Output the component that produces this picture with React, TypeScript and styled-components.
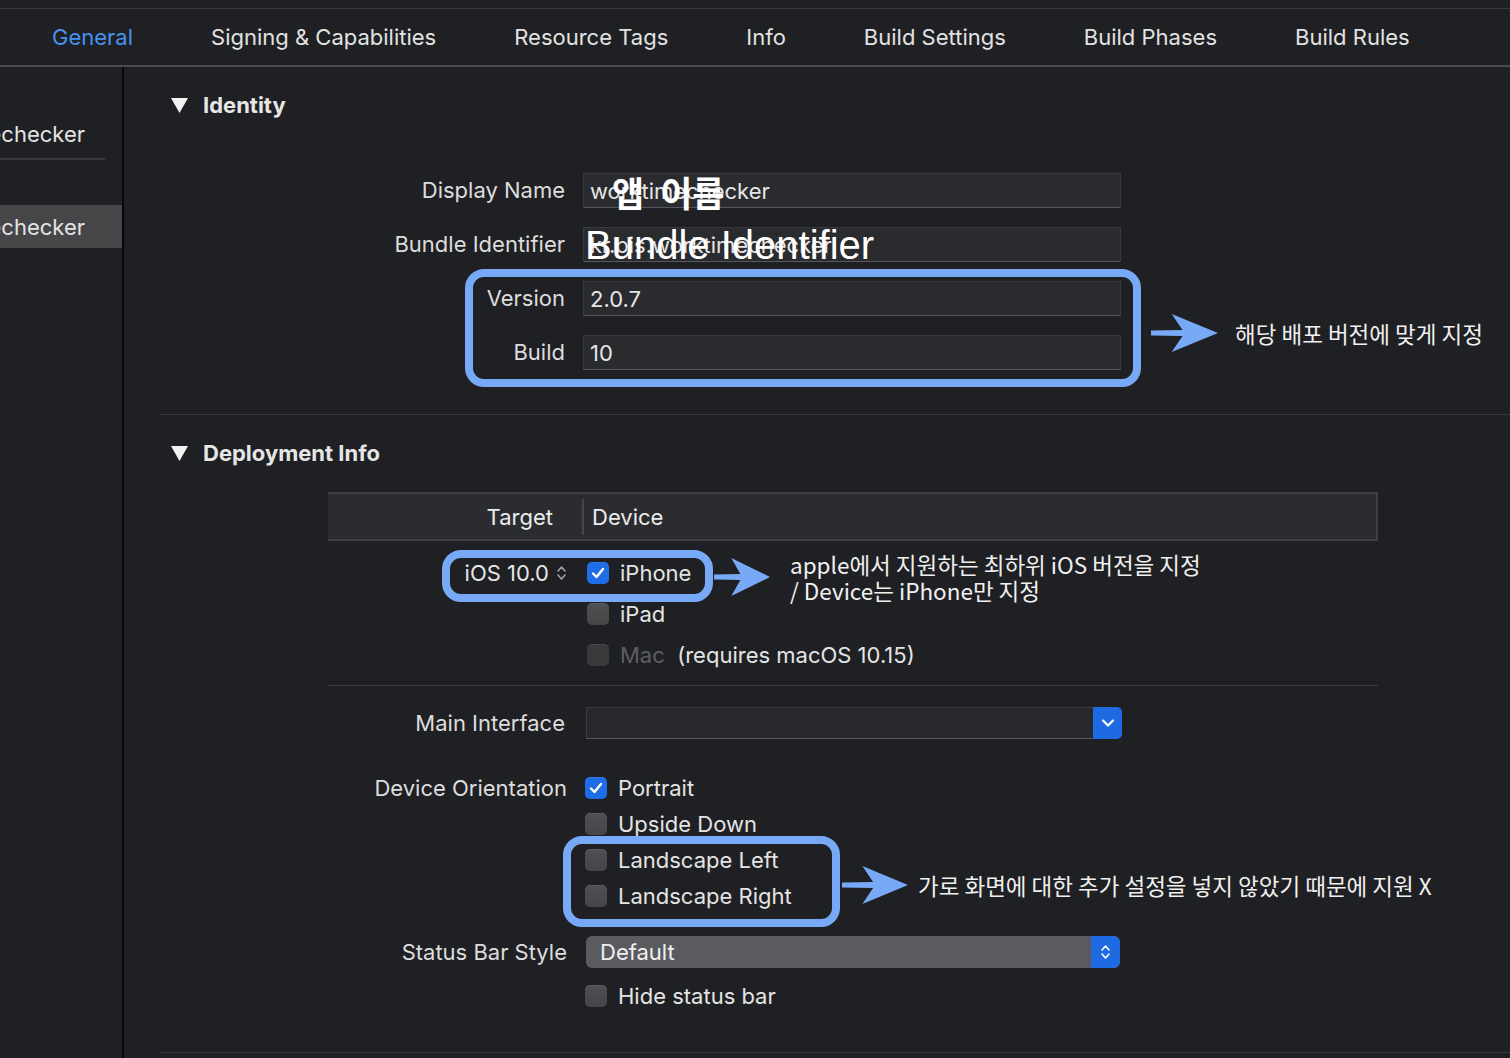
import React from 'react';
import styled, {createGlobalStyle} from 'styled-components';

const BLUE = '#78a9f7';
const UI = `Inter, "Noto Sans", "Noto Sans CJK KR", sans-serif`;
const KR = `"Noto Sans CJK KR", "Noto Sans", sans-serif`;

const GlobalStyle = createGlobalStyle`
  html, body {
    margin: 0;
    padding: 0;
    background: #1f2023;
  }
  body {
    font-family: ${UI};
    -webkit-font-smoothing: antialiased;
  }
`;

const Page = styled.div`
  width: 1510px;
  height: 1058px;
  overflow: hidden;
  background: #1f2023;
  display: flex;
  flex-direction: column;
  color: #e0e0e0;
`;

const TabBar = styled.div`
  margin-top: 8px;
  height: 56px;
  border-top: 1px solid #38393c;
  border-bottom: 2px solid #4a4b4e;
  display: flex;
  align-items: center;
  padding-left: 52px;
  gap: 78px;
`;

const Tab = styled.div<{$active?: boolean}>`
  font-size: 22px;
  color: ${p => (p.$active ? '#4592ef' : '#e2e2e2')};
  white-space: nowrap;
`;

const Body = styled.div`
  flex: 1;
  display: flex;
  min-height: 0;
`;

const Sidebar = styled.div`
  width: 122px;
  flex-shrink: 0;
  border-right: 2px solid #070707;
  padding-top: 45px;
  display: flex;
  flex-direction: column;
`;

const SideItem = styled.div<{$selected?: boolean; $mt?: number}>`
  height: ${p => (p.$selected ? 43 : 44)}px;
  margin-top: ${p => p.$mt ?? 0}px;
  display: flex;
  align-items: center;
  justify-content: flex-end;
  padding-right: 37px;
  overflow: hidden;
  white-space: nowrap;
  font-size: 22px;
  color: #e4e4e4;
  background: ${p => (p.$selected ? '#464649' : 'transparent')};
`;

const SideRule = styled.div`
  width: 105px;
  height: 2px;
  margin-top: 2px;
  background: #36373a;
`;

const Main = styled.div`
  flex: 1;
  display: flex;
  flex-direction: column;
`;

const SectionHeader = styled.div<{$mt: number}>`
  margin-top: ${p => p.$mt}px;
  height: 40px;
  padding-left: 47px;
  display: flex;
  align-items: center;
  gap: 15px;
  font-size: 22px;
  font-weight: 700;
  color: #e6e6e6;
`;

const Rule = styled.div<{$mt: number; $left: number; $width?: number}>`
  margin-top: ${p => p.$mt}px;
  margin-left: ${p => p.$left}px;
  width: ${p => (p.$width ? `${p.$width}px` : 'auto')};
  height: 1px;
  background: #3a3b3e;
`;

const Stack = styled.div<{$mt?: number; $gap?: number}>`
  margin-top: ${p => p.$mt ?? 0}px;
  display: flex;
  flex-direction: column;
  gap: ${p => p.$gap ?? 0}px;
  position: relative;
`;

const Row = styled.div<{$height?: number; $mt?: number; $gap?: number; $start?: boolean}>`
  margin-top: ${p => p.$mt ?? 0}px;
  display: grid;
  grid-template-columns: 441px auto;
  column-gap: ${p => p.$gap ?? 18}px;
  align-items: ${p => (p.$start ? 'start' : 'center')};
  justify-content: start;
  min-height: ${p => p.$height ?? 35}px;
  position: relative;
`;

const Label = styled.div<{$height?: number; $shift?: number}>`
  text-align: right;
  font-size: 22px;
  color: #dddddd;
  white-space: nowrap;
  line-height: ${p => p.$height ?? 35}px;
  margin-right: ${p => -(p.$shift ?? 0)}px;
`;

const TextField = styled.div`
  position: relative;
  width: 538px;
  height: 35px;
  box-sizing: border-box;
  background: #2a2b2e;
  border: 1px solid #38393c;
  border-bottom-color: #55575b;
  padding-left: 6px;
  display: flex;
  align-items: center;
  font-size: 22px;
  color: #e6e6e6;
  white-space: nowrap;
`;

const Overlay = styled.span<{$left: number; $kr?: boolean}>`
  position: absolute;
  left: ${p => p.$left}px;
  top: 50%;
  transform: translateY(-50%);
  color: #ffffff;
  white-space: nowrap;
  font-family: ${p => (p.$kr ? KR : `"Liberation Sans", Arial, sans-serif`)};
  font-size: ${p => (p.$kr ? 35 : 40)}px;
  font-weight: ${p => (p.$kr ? 700 : 400)};
  word-spacing: ${p => (p.$kr ? 8 : 0)}px;
  line-height: 1;
`;

const Frame = styled.span<{$top: number; $left: number; $width: number; $height: number}>`
  position: absolute;
  top: ${p => p.$top}px;
  left: ${p => p.$left}px;
  width: ${p => p.$width}px;
  height: ${p => p.$height}px;
  box-sizing: border-box;
  border: 8px solid ${BLUE};
  border-radius: 19px;
  pointer-events: none;
`;

const Callout = styled.div<{$top: number; $left: number; $gap: number}>`
  position: absolute;
  top: ${p => p.$top}px;
  left: ${p => p.$left}px;
  transform: translateY(-50%);
  display: flex;
  align-items: center;
  gap: ${p => p.$gap}px;
`;

const Note = styled.div`
  font-family: ${KR};
  font-size: 22.5px;
  font-weight: 400;
  color: #f0f0f0;
  line-height: 26px;
  white-space: nowrap;
`;

const TableHead = styled.div`
  margin-top: 19px;
  margin-left: 204px;
  width: 1050px;
  height: 49px;
  box-sizing: border-box;
  background: #2a2c30;
  border-top: 2px solid #3d3f43;
  border-bottom: 2px solid #3d3f43;
  border-right: 2px solid #3d3f43;
  display: flex;
  align-items: center;
  font-size: 22px;
  color: #ececec;
`;

const HeadCell = styled.div<{$target?: boolean}>`
  width: ${p => (p.$target ? '254px' : 'auto')};
  box-sizing: border-box;
  text-align: ${p => (p.$target ? 'right' : 'left')};
  padding: ${p => (p.$target ? '0 29px 0 0' : '0 0 0 8px')};
`;

const HeadDivider = styled.div`
  width: 2px;
  height: 36px;
  background: #44464a;
`;

const DeviceList = styled.div`
  margin-top: 11px;
  margin-left: 204px;
  width: 1050px;
  display: flex;
  flex-direction: column;
`;

const DeviceRow = styled.div`
  position: relative;
  height: 41px;
  display: grid;
  grid-template-columns: 254px auto;
  align-items: center;
  justify-content: start;
`;

const TargetCell = styled.div`
  display: flex;
  justify-content: flex-end;
  align-items: center;
  gap: 7px;
  padding-right: 15px;
  font-size: 22px;
  color: #e6e6e6;
`;

const CheckRow = styled.div<{$height?: number; $pad?: number}>`
  height: ${p => p.$height ?? 36}px;
  padding-left: ${p => p.$pad ?? 0}px;
  display: flex;
  align-items: center;
  gap: 11px;
  font-size: 22px;
  color: #e4e4e4;
  white-space: nowrap;
`;

const Box = styled.span<{$checked?: boolean; $disabled?: boolean}>`
  width: 22px;
  height: 22px;
  border-radius: 5px;
  flex-shrink: 0;
  display: flex;
  align-items: center;
  justify-content: center;
  background: ${p =>
    p.$checked ? '#1f6de6' : p.$disabled ? '#3a3a3c' : 'linear-gradient(#505053, #464649)'};
  box-shadow: inset 0 1px 0 rgba(255, 255, 255, 0.08);
`;

const Muted = styled.span`
  color: #5d5e61;
`;

const Combo = styled.div`
  width: 536px;
  height: 32px;
  display: flex;
  box-sizing: border-box;
`;

const ComboField = styled.div`
  flex: 1;
  background: #27282b;
  border: 1px solid #3a3b3e;
  border-bottom-color: #55575b;
  border-right: none;
`;

const BlueButton = styled.div<{$round?: boolean}>`
  width: 29px;
  background: #1e6ae2;
  border-radius: ${p => (p.$round ? '0 6px 6px 0' : '0 5px 5px 0')};
  display: flex;
  align-items: center;
  justify-content: center;
`;

const Popup = styled.div`
  width: 534px;
  height: 32px;
  border-radius: 6px;
  background: #5a5b5e;
  display: flex;
  overflow: hidden;
`;

const PopupText = styled.div`
  flex: 1;
  padding-left: 14px;
  display: flex;
  align-items: center;
  font-size: 22px;
  color: #f0f0f0;
`;

const Disclosure = () => (
  <svg width="17" height="15" viewBox="0 0 17 15">
    <path d="M0 0 H17 L8.5 15 Z" fill="#f2f2f2" />
  </svg>
);

const Check = () => (
  <svg width="16" height="16" viewBox="0 0 16 16">
    <path d="M3 8.5 L6.5 12 L13 4" fill="none" stroke="#fff" strokeWidth="2.4" strokeLinecap="round" strokeLinejoin="round" />
  </svg>
);

const UpDown = ({color, size = 18}: {color: string; size?: number}) => (
  <svg width="11" height={size} viewBox="0 0 11 18">
    <path d="M2 7 L5.5 3 L9 7 M2 11 L5.5 15 L9 11" fill="none" stroke={color} strokeWidth="1.6" strokeLinecap="round" strokeLinejoin="round" />
  </svg>
);

const ChevronDown = () => (
  <svg width="14" height="10" viewBox="0 0 14 10">
    <path d="M2 2.5 L7 7.5 L12 2.5" fill="none" stroke="#fff" strokeWidth="2.2" strokeLinecap="round" strokeLinejoin="round" />
  </svg>
);

const Arrow = ({width}: {width: number}) => (
  <svg width={width} height="38" viewBox="0 0 68 38" preserveAspectRatio="none">
    <path d="M0 16.5 L32 16 L21 0 L68 19 L21 38 L32 22 L0 21.5 Z" fill={BLUE} />
  </svg>
);

const tabs = ['General', 'Signing & Capabilities', 'Resource Tags', 'Info', 'Build Settings', 'Build Phases', 'Build Rules'];

const orientations = [
  {name: 'Portrait', checked: true},
  {name: 'Upside Down', checked: false},
];

export default function App() {
  return (
    <>
      <GlobalStyle />
      <Page>
        <TabBar>
          {tabs.map((t, i) => (
            <Tab key={t} $active={i === 0}>
              {t}
            </Tab>
          ))}
        </TabBar>
        <Body>
          <Sidebar>
            <SideItem>worktimechecker</SideItem>
            <SideRule />
            <SideItem $selected $mt={45}>
              worktimechecker
            </SideItem>
          </Sidebar>
          <Main>
            <SectionHeader $mt={18}>
              <Disclosure />
              Identity
            </SectionHeader>
            <Stack $mt={48} $gap={19}>
              <Row>
                <Label>Display Name</Label>
                <TextField>
                  worktimechecker
                  <Overlay $kr $left={28}>
                    앱 이름
                  </Overlay>
                </TextField>
              </Row>
              <Row>
                <Label>Bundle Identifier</Label>
                <TextField>
                  kr.bis.worktimechecker
                  <Overlay $left={1}>Bundle Identifier</Overlay>
                </TextField>
              </Row>
              <Stack $gap={19}>
                <Row>
                  <Label>Version</Label>
                  <TextField>2.0.7</TextField>
                </Row>
                <Row>
                  <Label>Build</Label>
                  <TextField>10</TextField>
                </Row>
                <Frame $top={-12} $left={341} $width={676} $height={118} />
                <Callout $top={52} $left={1027} $gap={17}>
                  <Arrow width={67} />
                  <Note>해당 배포 버전에 맞게 지정</Note>
                </Callout>
              </Stack>
            </Stack>

            <Rule $mt={44} $left={36} />

            <SectionHeader $mt={18}>
              <Disclosure />
              Deployment Info
            </SectionHeader>

            <TableHead>
              <HeadCell $target>Target</HeadCell>
              <HeadDivider />
              <HeadCell>Device</HeadCell>
            </TableHead>

            <DeviceList>
              <DeviceRow>
                <TargetCell>
                  iOS 10.0
                  <UpDown color="#a0a0a2" />
                </TargetCell>
                <CheckRow $height={41} $pad={5}>
                  <Box $checked>
                    <Check />
                  </Box>
                  iPhone
                </CheckRow>
                <Frame $top={-2} $left={114} $width={271} $height={52} />
                <Callout $top={25} $left={386} $gap={20}>
                  <Arrow width={56} />
                  <Note>
                    apple에서 지원하는 최하위 iOS 버전을 지정
                    <br />/ Device는 iPhone만 지정
                  </Note>
                </Callout>
              </DeviceRow>
              <DeviceRow>
                <span />
                <CheckRow $height={41} $pad={5}>
                  <Box />
                  iPad
                </CheckRow>
              </DeviceRow>
              <DeviceRow>
                <span />
                <CheckRow $height={41} $pad={5}>
                  <Box $disabled />
                  <span>
                    <Muted>Mac</Muted>&nbsp; (requires macOS 10.15)
                  </span>
                </CheckRow>
              </DeviceRow>
            </DeviceList>

            <Rule $mt={10} $left={204} $width={1050} />

            <Row $mt={21} $height={32} $gap={21}>
              <Label $height={32}>Main Interface</Label>
              <Combo>
                <ComboField />
                <BlueButton>
                  <ChevronDown />
                </BlueButton>
              </Combo>
            </Row>

            <Row $mt={31} $height={36} $gap={18} $start>
              <Label $height={36} $shift={2}>
                Device Orientation
              </Label>
              <Stack>
                {orientations.map(o => (
                  <CheckRow key={o.name} $pad={2}>
                    <Box $checked={o.checked}>{o.checked && <Check />}</Box>
                    {o.name}
                  </CheckRow>
                ))}
                <Stack>
                  <CheckRow $pad={2}>
                    <Box />
                    Landscape Left
                  </CheckRow>
                  <CheckRow $pad={2}>
                    <Box />
                    Landscape Right
                  </CheckRow>
                  <Frame $top={-6} $left={-20} $width={277} $height={91} />
                  <Callout $top={43} $left={259} $gap={10}>
                    <Arrow width={66} />
                    <Note>가로 화면에 대한 추가 설정을 넣지 않았기 때문에 지원 X</Note>
                  </Callout>
                </Stack>
              </Stack>
            </Row>

            <Row $mt={22} $height={32} $gap={21}>
              <Label $height={32} $shift={2}>
                Status Bar Style
              </Label>
              <Popup>
                <PopupText>Default</PopupText>
                <BlueButton $round>
                  <UpDown color="#ffffff" size={20} />
                </BlueButton>
              </Popup>
            </Row>

            <Row $mt={10} $height={36} $gap={18}>
              <span />
              <CheckRow $pad={2}>
                <Box />
                Hide status bar
              </CheckRow>
            </Row>

            <Rule $mt={38} $left={36} />
          </Main>
        </Body>
      </Page>
    </>
  );
}
